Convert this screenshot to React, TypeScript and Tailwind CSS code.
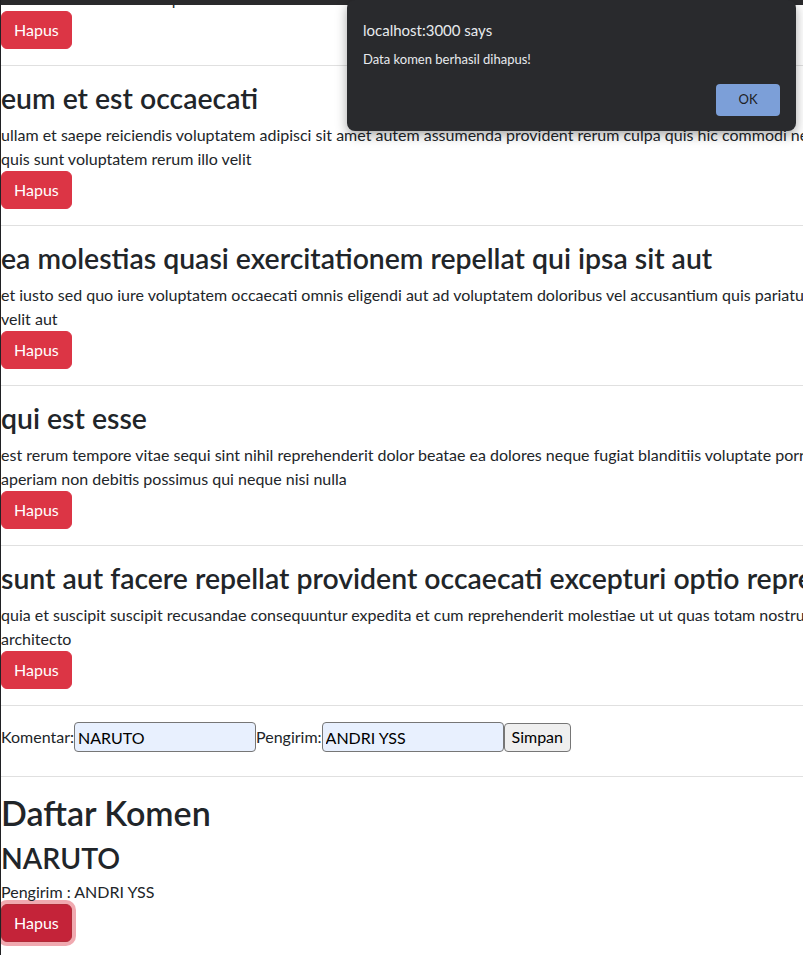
import React from "react";

type Post = { title: string; lines: string[] };

const posts: Post[] = [
  {
    title: "eum et est occaecati",
    lines: [
      "ullam et saepe reiciendis voluptatem adipisci sit amet autem assumenda provident rerum culpa quis hic commodi nesciunt rem tenetur doloremque ipsam iure",
      "quis sunt voluptatem rerum illo velit",
    ],
  },
  {
    title: "ea molestias quasi exercitationem repellat qui ipsa sit aut",
    lines: [
      "et iusto sed quo iure voluptatem occaecati omnis eligendi aut ad voluptatem doloribus vel accusantium quis pariatur molestiae porro eius odio et labore et",
      "velit aut",
    ],
  },
  {
    title: "qui est esse",
    lines: [
      "est rerum tempore vitae sequi sint nihil reprehenderit dolor beatae ea dolores neque fugiat blanditiis voluptate porro vel nihil molestiae ut reiciendis qui",
      "aperiam non debitis possimus qui neque nisi nulla",
    ],
  },
  {
    title: "sunt aut facere repellat provident occaecati excepturi optio reprehenderit",
    lines: [
      "quia et suscipit suscipit recusandae consequuntur expedita et cum reprehenderit molestiae ut ut quas totam nostrum rerum est autem sunt rem eveniet",
      "architecto",
    ],
  },
];

function HapusButton({ focused }: { focused?: boolean }) {
  return (
    <button
      className={
        focused
          ? "block rounded-md border border-[#b02a37] bg-[#c42339] px-3 py-1.5 text-base leading-6 text-white shadow-[0_0_0_4px_rgba(225,83,97,0.5)]"
          : "block rounded-md border border-[#dc3545] bg-[#dc3545] px-3 py-1.5 text-base leading-6 text-white"
      }
    >
      Hapus
    </button>
  );
}

function Divider() {
  return <hr className="my-4 border-[#e0e0e0]" />;
}

function PostItem({ title, lines }: Post) {
  return (
    <article>
      <h2 className="mb-2 whitespace-nowrap text-[28.4px] font-semibold leading-[33px]">{title}</h2>
      <div>
        {lines.map((line) => (
          <p key={line} className="whitespace-nowrap leading-6">
            {line}
          </p>
        ))}
      </div>
      <HapusButton />
    </article>
  );
}

function AlertDialog() {
  return (
    <div className="absolute left-[346px] top-0 w-[449px] h-[131px] rounded-lg bg-[#292a2d] px-4 pt-5 shadow-[0_4px_12px_rgba(0,0,0,0.35)]">
      <div className="text-[15px] leading-5 text-[#e8eaed]">localhost:3000 says</div>
      <div className="mt-2.5 text-[13px] leading-[18px] text-[#e8eaed]">Data komen berhasil dihapus!</div>
      <div className="mt-4 flex justify-end">
        <button className="h-8 w-16 rounded bg-[#7c9fd8] text-[13px] text-[#202124]">OK</button>
      </div>
    </div>
  );
}

export default function App() {
  return (
    <div className="relative h-[955px] w-[803px] overflow-hidden border-l border-[#202124] bg-white font-['Lato',sans-serif] text-base text-[#212529]">
      <div className="flex h-[11px] flex-col justify-end overflow-hidden">
        <p className="whitespace-nowrap leading-6">est aut tenetur dolor neque</p>
      </div>
      <HapusButton />
      {posts.map((p) => (
        <div key={p.title}>
          <Divider />
          <PostItem {...p} />
        </div>
      ))}
      <Divider />
      <form className="mb-6 mt-px flex h-[30px] items-center">
        <label>Komentar:</label>
        <input
          defaultValue="NARUTO"
          className="h-[30px] w-[182px] rounded-sm border border-[#767676] bg-[#e8f0fe] px-[3px] text-base text-black"
        />
        <label>Pengirim:</label>
        <input
          defaultValue="ANDRI YSS"
          className="h-[30px] w-[182px] rounded-sm border border-[#767676] bg-[#e8f0fe] px-[3px] text-base text-black"
        />
        <button
          type="button"
          className="h-[29px] rounded-sm border border-[#767676] bg-[#efefef] px-[7px] text-base text-black"
        >
          Simpan
        </button>
      </form>
      <Divider />
      <h1 className="mb-2 text-[34px] font-semibold leading-[1.2]">Daftar Komen</h1>
      <h2 className="mb-[5px] text-[28.4px] font-semibold leading-[33px]">NARUTO</h2>
      <p className="leading-6">Pengirim : ANDRI YSS</p>
      <HapusButton focused />
      <div className="absolute left-0 top-0 h-[5px] w-full bg-[#2a2a2c]" />
      <AlertDialog />
    </div>
  );
}
